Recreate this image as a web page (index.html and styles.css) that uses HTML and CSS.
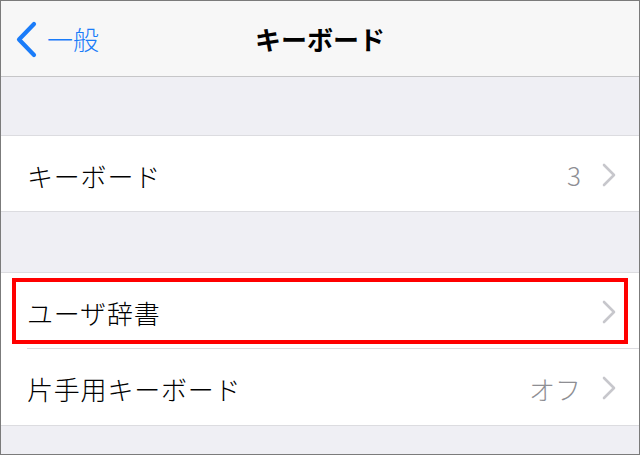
FILE: index.html
```html
<!DOCTYPE html>
<html lang="ja">
<head>
<meta charset="utf-8">
<link rel="stylesheet" href="styles.css">
</head>
<body>
<div class="frame">
  <header class="nav">
    <div class="back">
      <svg class="back-chev" width="22" height="37" viewBox="0 0 22 37"><path d="M19 3 L4 18.5 L19 34" fill="none" stroke="#1a7cf9" stroke-width="4.2" stroke-linecap="round" stroke-linejoin="round"/></svg>
      <span class="back-label">一般</span>
    </div>
    <div class="title">キーボード</div>
  </header>
  <div class="gap gap1"></div>
  <section class="group">
    <div class="row">
      <span class="label">キーボード</span>
      <span class="value">3</span>
      <svg class="chev" width="14" height="24" viewBox="0 0 14 24"><path d="M2 2 L12 12 L2 22" fill="none" stroke="#c7c7cc" stroke-width="2.6" stroke-linecap="round" stroke-linejoin="round"/></svg>
    </div>
  </section>
  <div class="gap gap2"></div>
  <section class="group">
    <div class="row highlighted">
      <span class="label">ユーザ辞書</span>
      <svg class="chev" width="14" height="24" viewBox="0 0 14 24"><path d="M2 2 L12 12 L2 22" fill="none" stroke="#c7c7cc" stroke-width="2.6" stroke-linecap="round" stroke-linejoin="round"/></svg>
      <div class="mark"></div>
    </div>
    <div class="sep"></div>
    <div class="row row3">
      <span class="label">片手用キーボード</span>
      <span class="value">オフ</span>
      <svg class="chev" width="14" height="24" viewBox="0 0 14 24"><path d="M2 2 L12 12 L2 22" fill="none" stroke="#c7c7cc" stroke-width="2.6" stroke-linecap="round" stroke-linejoin="round"/></svg>
    </div>
  </section>
  <div class="gap gap3"></div>
</div>
</body>
</html>
```
FILE: styles.css
```css
* { box-sizing: border-box; }
html, body { margin: 0; padding: 0; }
body {
  font-family: "Noto Sans CJK JP", "Noto Sans", sans-serif;
  background: #efeff4;
}
.frame {
  width: 640px;
  height: 455px;
  border: 1px solid #7b7b7b;
  background: #efeff4;
  display: flex;
  flex-direction: column;
  overflow: hidden;
}
.nav {
  height: 76px;
  flex: none;
  background: #f7f7f7;
  border-bottom: 1px solid #c6c6c8;
  display: flex;
  align-items: center;
  position: relative;
}
.back {
  display: flex;
  align-items: center;
  padding-left: 14px;
  gap: 10px;
}
.back-chev { display: block; margin-top: 1px; }
.back-label {
  color: #1a7cf9;
  font-size: 26px;
  font-weight: 300;
  line-height: 1;
}
.title {
  position: absolute;
  left: 0;
  right: 0;
  top: 0;
  bottom: 0;
  display: flex;
  align-items: center;
  justify-content: center;
  font-size: 26px;
  font-weight: 700;
  color: #000;
  pointer-events: none;
}
.gap { flex: none; }
.gap1 { height: 58px; }
.gap2 { height: 60px; }
.gap3 { flex: 1; }
.group {
  flex: none;
  background: #fff;
  border-top: 1px solid #dcdce0;
  border-bottom: 1px solid #dcdce0;
}
.row {
  height: 75px;
  display: flex;
  align-items: center;
  padding-left: 26px;
  padding-right: 23px;
  position: relative;
}
.row3 { height: 76px; }
.label {
  flex: 1;
  font-size: 26px;
  font-weight: 300;
  letter-spacing: 0.8px;
  color: #000;
  line-height: 1;
  padding-top: 4px;
}
.value {
  font-size: 26px;
  font-weight: 300;
  color: #8e8e93;
  line-height: 1;
  margin-right: 21px;
  padding-top: 3px;
}
.chev { display: block; flex: none; margin-top: 2px; }
.sep {
  height: 1px;
  margin-left: 26px;
  background: #dcdce0;
}
.mark {
  position: absolute;
  left: 11px;
  right: 11px;
  top: 5px;
  bottom: 4px;
  border: 4px solid #ff0000;
  pointer-events: none;
}
```
